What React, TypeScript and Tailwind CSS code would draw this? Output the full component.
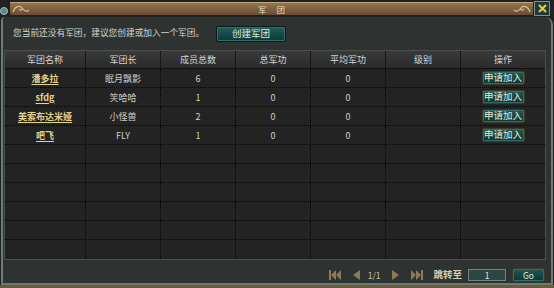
import React from "react";

type Legion = {
  name: string;
  leader: string;
  members: number;
  total: number;
  avg: number;
};

const legions: Legion[] = [
  { name: "潘多拉", leader: "眠月飘影", members: 6, total: 0, avg: 0 },
  { name: "sfdg", leader: "笑哈哈", members: 1, total: 0, avg: 0 },
  { name: "美索布达米娅", leader: "小怪兽", members: 2, total: 0, avg: 0 },
  { name: "吧飞", leader: "FLY", members: 1, total: 0, avg: 0 },
];

const headers = ["军团名称", "军团长", "成员总数", "总军功", "平均军功", "级别", "操作"];

const cols = "grid grid-cols-[81px_75px_75px_75px_75px_75px_84px]";

const Swirl = ({ flip }: { flip?: boolean }) => (
  <svg width="18" height="10" viewBox="0 0 18 10" className={flip ? "-scale-x-100" : ""}>
    <path
      d="M1 8 C3 2, 8 1, 10 4 C11 6, 8 7, 7 5 M10 4 C12 7, 15 8, 17 6"
      stroke="#d2bc94"
      strokeWidth="1.2"
      fill="none"
    />
  </svg>
);

const JoinButton = () => (
  <button className="w-[43px] h-[14px] border border-[#3b3b26] rounded-[2px] bg-gradient-to-b from-[#1f5a57] to-[#0e3533] shadow-[inset_0_0_0_1px_#2f6d66] text-[9.5px] leading-none text-[#e6e6d6]">
    申请加入
  </button>
);

const NavIcon = ({ kind }: { kind: "first" | "prev" | "next" | "last" }) => {
  const c = "#8c7b57";
  if (kind === "prev")
    return (
      <svg width="7" height="10" viewBox="0 0 7 10">
        <path d="M7 0 L0 5 L7 10 Z" fill={c} />
      </svg>
    );
  if (kind === "next")
    return (
      <svg width="7" height="10" viewBox="0 0 7 10">
        <path d="M0 0 L7 5 L0 10 Z" fill={c} />
      </svg>
    );
  if (kind === "first")
    return (
      <svg width="12" height="10" viewBox="0 0 12 10">
        <rect x="0" y="0" width="2" height="10" fill={c} />
        <path d="M7 0 L2 5 L7 10 Z M12 0 L7 5 L12 10 Z" fill={c} />
      </svg>
    );
  return (
    <svg width="12" height="10" viewBox="0 0 12 10">
      <path d="M0 0 L5 5 L0 10 Z M5 0 L10 5 L5 10 Z" fill={c} />
      <rect x="10" y="0" width="2" height="10" fill={c} />
    </svg>
  );
};

export default function App() {
  const rows: (Legion | null)[] = [...legions, ...Array(6).fill(null)];

  return (
    <div className="w-[554px] h-[288px] flex flex-col bg-[#1e2321] font-['Noto_Sans_CJK_SC',sans-serif] overflow-hidden">
      {/* title bar */}
      <div className="h-[17px] flex items-start shrink-0">
        <div className="w-[10px] h-[17px] flex items-center">
          <div className="w-[8px] h-[8px] mt-[4px] rounded-full bg-[#5e8884] border border-[#a7c0bb]" />
        </div>
        <div className="flex-1 h-[14px] mt-[2px] bg-gradient-to-b from-[#957650] via-[#7e6140] to-[#684c30] border-t border-[#bfa57c] border-b border-b-[#2a1e12] flex items-center justify-between px-[2px]">
          <Swirl />
          <div className="text-[8.5px] leading-none text-[#e8dcbc] tracking-[10px] pl-[10px]">军团</div>
          <Swirl flip />
        </div>
        <div className="w-[16px] h-[15px] mt-[1px] ml-[1px] bg-[#1f3a38] border border-[#7d908c] flex items-center justify-center">
          <svg width="9" height="9" viewBox="0 0 9 9">
            <path d="M1 1 L8 8 M8 1 L1 8" stroke="#f0c81c" strokeWidth="2.2" />
          </svg>
        </div>
        <div className="w-[4px]" />
      </div>

      {/* body */}
      <div className="flex-1 mx-[1px] border-x-2 border-b-2 border-[#6e7a75] rounded-tr-[8px] rounded-tl-[4px] bg-[#2e3331] flex flex-col">
        <div className="flex items-center h-[17px] mt-[8px] pl-[10px]">
          <span className="text-[8.7px] leading-none text-[#d2d4d0]">
            您当前还没有军团，建议您创建或加入一个军团。
          </span>
          <button className="ml-[12px] w-[70px] h-[16px] border border-[#0b1a18] rounded-[2px] bg-gradient-to-b from-[#22605c] to-[#0f3634] shadow-[inset_0_0_0_1px_#336f68] text-[9.5px] leading-none text-[#dfe8de]">
            创建军团
          </button>
        </div>

        <div className="ml-[1px] mt-[8px] w-[542px] border border-[#4b4f4d] bg-[#232323]">
          <div className={`${cols} h-[18px] bg-gradient-to-b from-[#3a3a3a] to-[#2a2a2a] border-b border-[#111]`}>
            {headers.map((h, i) => (
              <div
                key={h}
                className={`flex items-center justify-center text-[9px] leading-none text-[#d4d4d4] ${
                  i < headers.length - 1 ? "border-r border-[#161616]" : ""
                }`}
              >
                {h}
              </div>
            ))}
          </div>
          {rows.map((r, idx) => (
            <div
              key={idx}
              className={`${cols} h-[19px] ${idx < rows.length - 1 ? "border-b border-dotted border-[#050505]" : ""}`}
            >
              <div className="flex items-center justify-center border-r border-dotted border-[#050505]">
                {r && (
                  <span className="text-[9px] leading-none font-bold text-[#e4d28c] underline underline-offset-2">
                    {r.name}
                  </span>
                )}
              </div>
              <div className="flex items-center justify-center border-r border-dotted border-[#050505] text-[9px] leading-none text-[#cfcfcf]">
                {r?.leader}
              </div>
              <div className="flex items-center justify-center border-r border-dotted border-[#050505] text-[9px] leading-none text-[#cfcfcf]">
                {r?.members}
              </div>
              <div className="flex items-center justify-center border-r border-dotted border-[#050505] text-[9px] leading-none text-[#cfcfcf]">
                {r?.total}
              </div>
              <div className="flex items-center justify-center border-r border-dotted border-[#050505] text-[9px] leading-none text-[#cfcfcf]">
                {r?.avg}
              </div>
              <div className="border-r border-dotted border-[#050505]" />
              <div className="flex items-center justify-center">{r && <JoinButton />}</div>
            </div>
          ))}
        </div>

        <div className="flex items-center justify-end h-[14px] mt-[8px] pr-[6px]">
          <NavIcon kind="first" />
          <div className="ml-[12px]">
            <NavIcon kind="prev" />
          </div>
          <span className="ml-[8px] text-[8.5px] leading-none text-[#c9c0a0]">1/1</span>
          <div className="ml-[12px]">
            <NavIcon kind="next" />
          </div>
          <div className="ml-[12px]">
            <NavIcon kind="last" />
          </div>
          <span className="ml-[10px] text-[9.5px] leading-none font-bold text-[#d8cfae]">跳转至</span>
          <div className="ml-[6px] w-[38px] h-[12px] bg-[#2b4644] border border-[#74847c] flex items-center justify-center text-[8.5px] leading-none text-[#e4e4dc]">
            1
          </div>
          <button className="ml-[6px] w-[33px] h-[14px] border border-[#3b3b26] rounded-[2px] bg-gradient-to-b from-[#1f5a57] to-[#0e3533] shadow-[inset_0_0_0_1px_#2f6d66] text-[8.5px] leading-none text-[#e6e6d6]">
            Go
          </button>
        </div>
      </div>

      <div className="h-[3px] shrink-0 bg-[#6b5a38]" />
    </div>
  );
}
